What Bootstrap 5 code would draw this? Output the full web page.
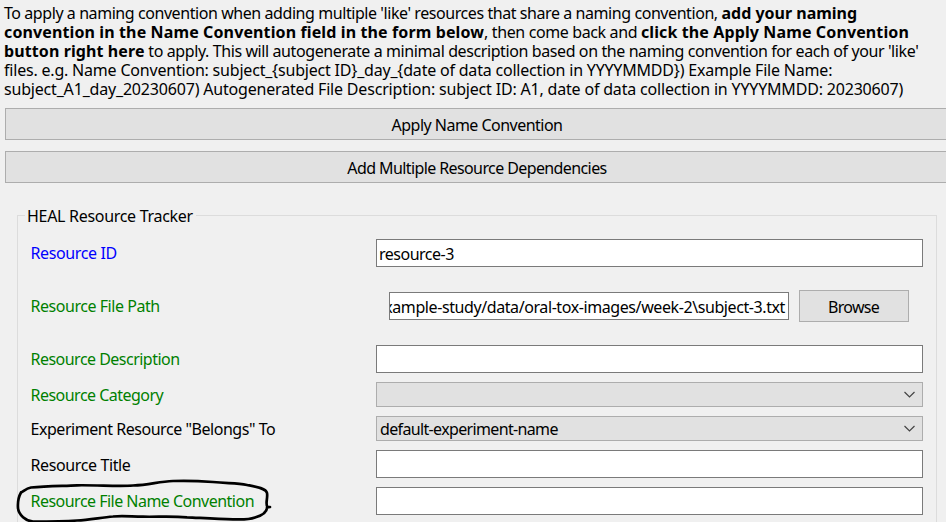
<!DOCTYPE html>
<html lang="en">
<head>
<meta charset="utf-8">
<meta name="viewport" content="width=device-width, initial-scale=1">
<title>HEAL Resource Tracker</title>
<link href="https://cdn.jsdelivr.net/npm/bootstrap@5.3.0/dist/css/bootstrap.min.css" rel="stylesheet">
<style>
body{background:#fff;color:#000;font:16px/19px "Noto Sans",sans-serif;overflow:hidden}
.panel{height:522px;background:#f0f0f0;padding:4px 0 0 5px}
.intro{margin-left:-1px;height:104px}
.intro span{display:block;white-space:nowrap;width:max-content}
.l1{letter-spacing:-.43px}
.l1 b{letter-spacing:0}
.l2{letter-spacing:-.38px}
.l2 b{letter-spacing:.12px}
.l3{letter-spacing:-.4px}
.l3 b{letter-spacing:.1px}
.l4{letter-spacing:-.2px}
.l5{letter-spacing:-.185px}
.push{background:#e1e1e1;border:1px solid #adadad;border-radius:0;color:#000;font-size:16px;line-height:19px;height:32px;padding:2px 0 0}
.push.wide{width:944px}
.push.browse{width:110px;margin-right:14px;letter-spacing:-.7px;padding-right:1px}
.t1{letter-spacing:-.52px}
.t2{letter-spacing:-.6px}
.tracker{width:920px;margin:23px 0 0 12px;border:1px solid #dcdcdc;padding:14px 13px 0;height:330px}
.tracker legend{font-size:16px;line-height:19px;height:19px;margin:0 0 0 -6px;padding:1px 3px 0 2px;white-space:nowrap;letter-spacing:-.3px}
.rows{gap:9px}
.rows label{width:345px;white-space:nowrap;letter-spacing:-.52px;text-indent:-.5px}
.rows label.looser{letter-spacing:-.38px}
.rows label.mid{letter-spacing:-.46px}
.low{padding-top:2px}
.req{color:#008000}.ident{color:#00f}
.entry{width:547px;height:28px;border:1px solid #7a7a7a;background:#fff;padding:5px 2px 0;letter-spacing:-.5px}
.path-row{margin:14px 0}
.path-row .entry{width:400px;margin-left:13px;padding-right:3px;letter-spacing:-.41px}
.clip{display:flex;justify-content:flex-end;overflow:hidden;white-space:nowrap}
.pick{width:547px;height:25px;border:1px solid #adadad;background:#e1e1e1;padding:2px 7px 0 3px;letter-spacing:-.65px}
.pick span{padding-top:1px}
.ring{left:0;top:470px;pointer-events:none}
</style>
</head>
<body>
<main class="panel position-relative overflow-hidden">
<p class="intro mb-0"><span class="l1">To apply a naming convention when adding multiple 'like' resources that share a naming convention, <b>add your naming</b></span>
<span class="l2"><b>convention in the Name Convention field in the form below</b>, then come back and <b>click the Apply Name Convention</b></span>
<span class="l3"><b>button right here</b> to apply. This will autogenerate a minimal description based on the naming convention for each of your 'like'</span>
<span class="l4">files. e.g. Name Convention: subject_{subject ID}_day_{date of data collection in YYYYMMDD}) Example File Name:</span>
<span class="l5">subject_A1_day_20230607) Autogenerated File Description: subject ID: A1, date of data collection in YYYYMMDD: 20230607)</span></p>
<div class="d-flex flex-column" style="gap:11px">
<button type="button" class="btn push wide"><span class="t1">Apply Name Convention</span></button>
<button type="button" class="btn push wide"><span class="t2">Add Multiple Resource Dependencies</span></button>
</div>
<fieldset class="tracker">
<legend class="w-auto float-none">HEAL Resource Tracker</legend>
<div class="rows d-flex flex-column">
<div class="d-flex align-items-center"><label class="ident looser">Resource ID</label><div class="entry">resource-3</div></div>
<div class="path-row d-flex align-items-center"><label class="req mid">Resource File Path</label><div class="entry clip"><span>example-study/data/oral-tox-images/week-2\subject-3.txt</span></div><button type="button" class="btn push browse ms-auto">Browse</button></div>
<div class="d-flex align-items-center"><label class="req">Resource Description</label><div class="entry"></div></div>
<div class="d-flex align-items-center"><label class="req low">Resource Category</label><div class="pick d-flex justify-content-end"><svg width="11" height="19" viewBox="0 0 11 19"><path d="M.5 7l5 5 5-5" fill="none" stroke="#444" stroke-width="1.2"/></svg></div></div>
<div class="d-flex align-items-center"><label class="mid low">Experiment Resource "Belongs" To</label><div class="pick d-flex justify-content-between"><span>default-experiment-name</span><svg width="11" height="19" viewBox="0 0 11 19"><path d="M.5 7l5 5 5-5" fill="none" stroke="#444" stroke-width="1.2"/></svg></div></div>
<div class="d-flex align-items-center"><label class="looser low">Resource Title</label><div class="entry"></div></div>
<div class="d-flex align-items-center"><label class="req">Resource File Name Convention</label><div class="entry"></div></div>
</div>
</fieldset>
<svg class="ring position-absolute" width="280" height="53" viewBox="0 470 280 53" fill="none" stroke="#000" stroke-width="2.7" stroke-linecap="round" stroke-linejoin="round"><path d="M21 492.5C24 491 26 488.500 31 487.500C46 486 62 486 77 485.300C98 485 118 486.500 133 485.500C150 485 158 481.500 173 481C187 480.500 200 481 213 482C228 483.500 237 483 247 485C255 486.500 266 488 267 493C268 498 265 504 267.500 507L270 507L267 507.500C267 512 262 515.500 255 517.500C248 520 241 519.500 233 519.300C217 519 202 518 187 517.300C172 516 158 517 143 516.700C130 516.500 122 515.500 113 516.500C101 517.500 89 520 77 520.500C62 521.500 47 521.500 33 521.500C26 521 18.500 515 18 508C17.500 501 19 496 21 492.500"/></svg>
</main>
<script src="https://cdn.jsdelivr.net/npm/bootstrap@5.3.0/dist/js/bootstrap.bundle.min.js"></script>
</body>
</html>
